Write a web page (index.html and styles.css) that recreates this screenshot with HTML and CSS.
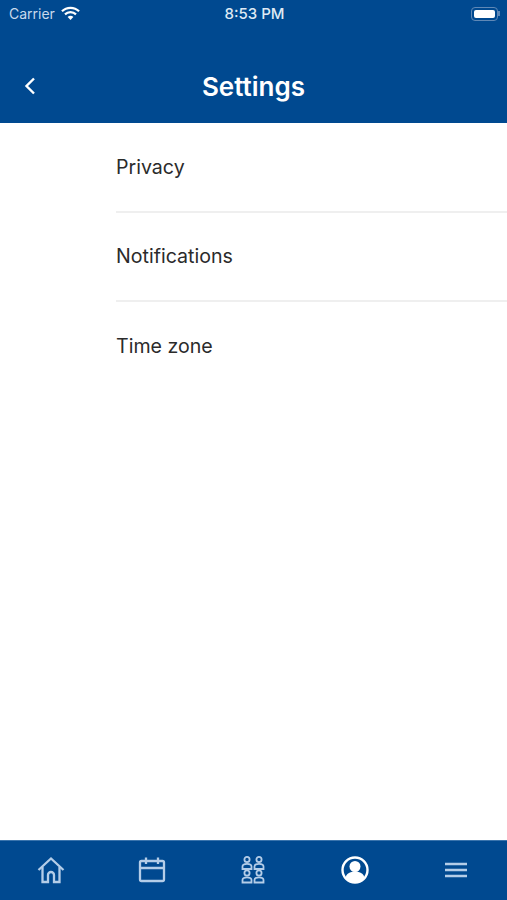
FILE: index.html
```html
<!DOCTYPE html>
<html lang="en">
<head>
    <meta charset="UTF-8">
    <meta name="viewport" content="width=device-width, initial-scale=1.0">
    <title>Settings</title>
    <link rel="stylesheet" href="styles.css">
</head>
<body>
    <div class="app">
        <header class="top-bar">
            <div class="status-bar">
                <div class="status-left">
                    <span class="carrier">Carrier</span>
                    <svg class="wifi" width="19" height="15" viewBox="0 0 20 15">
                        <path d="M1 5.200a12.800 12.800 0 0 1 18 0" fill="none" stroke="#fff" stroke-width="2.300"/>
                        <path d="M4.200 8.400a8.300 8.300 0 0 1 11.600 0" fill="none" stroke="#fff" stroke-width="2.300"/>
                        <path d="M7 11.200a4.200 4.200 0 0 1 6 0L10 14.400z" fill="#fff"/>
                    </svg>
                </div>
                <span class="clock">8:53 PM</span>
                <div class="battery">
                    <div class="battery-body"><div class="battery-level"></div></div>
                    <div class="battery-tip"></div>
                </div>
            </div>
            <div class="nav-bar">
                <svg class="back" width="12" height="18" viewBox="0 0 12 18">
                    <path d="M10 1.500L2.500 9l7.500 7.500" fill="none" stroke="#fff" stroke-width="2.400"/>
                </svg>
                <h1 class="nav-title">Settings</h1>
            </div>
        </header>

        <main class="settings-list">
            <div class="settings-item">Privacy</div>
            <div class="settings-item">Notifications</div>
            <div class="settings-item">Time zone</div>
        </main>

        <nav class="tab-bar">
            <div class="tab">
                <svg width="28" height="28" viewBox="0 0 28 28" fill="none" stroke="#b4cde8" stroke-width="2.300">
                    <path d="M1.500 14L14 2.500 26.500 14"/>
                    <path d="M5.500 11v15h5.500v-7a3 3 0 0 1 6 0v7h5.500V11"/>
                </svg>
            </div>
            <div class="tab">
                <svg width="28" height="28" viewBox="0 0 28 28" fill="none" stroke="#b4cde8" stroke-width="2.300">
                    <rect x="2" y="5" width="24" height="20" rx="1.500"/>
                    <path d="M2 12h24M8 1.500V8M20 1.500V8"/>
                </svg>
            </div>
            <div class="tab">
                <svg width="28" height="28" viewBox="0 0 28 28" fill="none" stroke="#b4cde8" stroke-width="1.800">
                    <circle cx="8" cy="3.500" r="2.600"/>
                    <path d="M3.500 13v-2.500c0-1.800 1.800-2.700 4.500-2.700s4.500 .9 4.500 2.700V13z"/>
                    <circle cx="20" cy="3.500" r="2.600"/>
                    <path d="M15.500 13v-2.500c0-1.800 1.800-2.700 4.500-2.700s4.500 .9 4.500 2.700V13z"/>
                    <circle cx="8" cy="17" r="2.600"/>
                    <path d="M3.500 26.500V24c0-1.800 1.800-2.700 4.500-2.700s4.500 .9 4.500 2.700v2.500z"/>
                    <circle cx="20" cy="17" r="2.600"/>
                    <path d="M15.500 26.500V24c0-1.800 1.800-2.700 4.500-2.700s4.500 .9 4.500 2.700v2.500z"/>
                </svg>
            </div>
            <div class="tab">
                <svg width="28" height="28" viewBox="0 0 28 28">
                    <circle cx="14" cy="14" r="12.500" fill="none" stroke="#fff" stroke-width="2.400"/>
                    <circle cx="14" cy="10.500" r="5.500" fill="#fff"/>
                    <path d="M4.500 22.500c.5-5 4.500-7 9.500-7s9 2 9.500 7a13 13 0 0 1-19 0z" fill="#fff"/>
                </svg>
            </div>
            <div class="tab">
                <svg width="24" height="18" viewBox="0 0 24 18" fill="none" stroke="#b4cde8" stroke-width="2.400">
                    <path d="M1 3h22M1 9h22M1 15h22"/>
                </svg>
            </div>
        </nav>
    </div>
</body>
</html>
```

FILE: styles.css
```css
* {
    margin: 0;
    padding: 0;
    box-sizing: border-box;
}

body {
    font-family: "Inter", "Liberation Sans", sans-serif;
    background: #fff;
    color: #2b2b2b;
}

.app {
    display: flex;
    flex-direction: column;
    height: 900px;
}

/* Top bar */
.top-bar {
    height: 123px;
    background: #004990;
    color: #fff;
    flex-shrink: 0;
}

.status-bar {
    display: grid;
    grid-template-columns: 1fr auto 1fr;
    align-items: center;
    height: 27px;
    padding: 0 7px 0 9px;
}

.status-left {
    display: flex;
    align-items: center;
    gap: 6px;
}

.carrier {
    font-size: 14px;
    color: #c9daec;
}

.clock {
    font-size: 15px;
    font-weight: 500;
    color: #dfe9f4;
}

.battery {
    display: flex;
    align-items: center;
    justify-content: flex-end;
}

.battery-body {
    width: 27px;
    height: 14px;
    padding: 2px;
    border: 1.5px solid #5f88b6;
    border-radius: 4px;
}

.battery-level {
    height: 100%;
    background: #fff;
    border-radius: 2px;
}

.battery-tip {
    width: 2px;
    height: 5px;
    background: #5f88b6;
}

.nav-bar {
    display: flex;
    align-items: center;
    justify-content: center;
    position: relative;
    height: 64px;
    margin-top: 27px;
}

.back {
    position: absolute;
    left: 24px;
    top: 23px;
}

.nav-title {
    font-size: 26px;
    font-weight: 600;
}

/* List */
.settings-list {
    flex: 1;
    padding-left: 116px;
}

.settings-item {
    display: flex;
    align-items: center;
    height: 89.5px;
    font-size: 19.6px;
    border-bottom: 2px solid #efefef;
}

.settings-item:last-child {
    border-bottom-color: transparent;
}

/* Tabs */
.tab-bar {
    display: grid;
    grid-template-columns: repeat(5, 1fr);
    align-items: center;
    height: 60px;
    padding-bottom: 2px;
    background: #004990;
    border-top: 1px solid #3a74ad;
    flex-shrink: 0;
}

.tab {
    display: flex;
    justify-content: center;
    align-items: center;
}
```
